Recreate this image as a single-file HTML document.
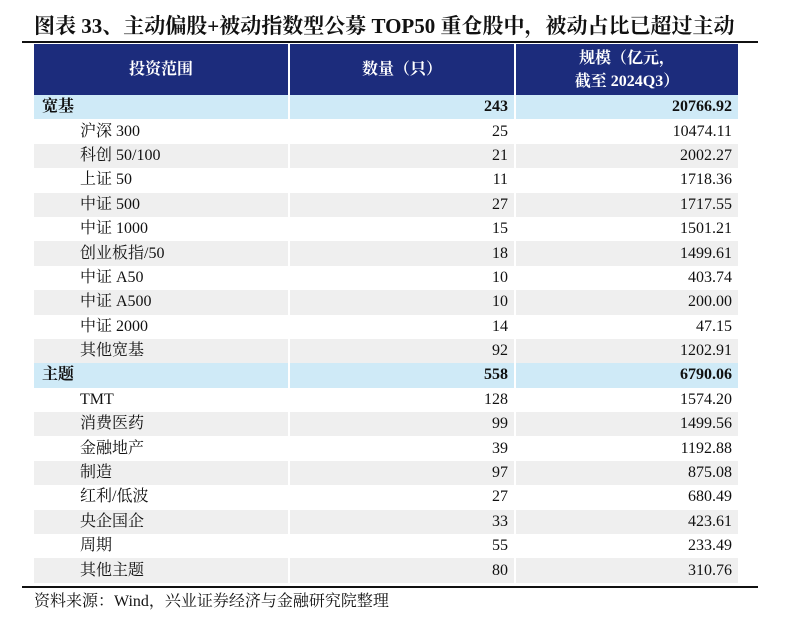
<!DOCTYPE html>
<html><head><meta charset="utf-8"><style>
body{margin:0;width:792px;height:623px;background:#fff;font-family:"Liberation Serif","Noto Serif CJK SC",serif;color:#111;position:relative;overflow:hidden}
.title{position:absolute;left:34px;top:10px;font-size:21px;font-weight:bold;white-space:nowrap;letter-spacing:0}
.line{position:absolute;left:22px;width:736px;height:1.5px;background:#111}
table{position:absolute;left:34px;top:44px;width:704px;border-collapse:collapse;font-size:16px;table-layout:fixed}
td{padding:0;height:24.4px;border-left:2px solid #fff;line-height:24px}
td:first-child{border-left:none}
th{background:#1c2c7c;color:#fff;height:51px;font-weight:bold;font-size:16px;border-left:2px solid #fff;line-height:23px;padding:0}
th:first-child{border-left:none}
.c1{width:254px}.c2{width:224px}
td.n{text-align:right;padding-right:6px}
td.l{padding-left:46px}
tr.b td{background:#cfeaf7;font-weight:bold}
tr.b td.l{padding-left:8px}
tr.g td{background:#efefef}
.src{position:absolute;left:34px;top:588px;font-size:16px}
</style></head><body>
<div class="title">图表 33、主动偏股+被动指数型公募 TOP50 重仓股中，被动占比已超过主动</div>
<div class="line" style="top:41px"></div>
<table>
<tr><th class="c1">投资范围</th><th class="c2">数量（只）</th><th>规模（亿元，<br>截至 2024Q3）</th></tr>
<tr class="b"><td class="l">宽基</td><td class="n">243</td><td class="n">20766.92</td></tr>
<tr><td class="l">沪深 300</td><td class="n">25</td><td class="n">10474.11</td></tr>
<tr class="g"><td class="l">科创 50/100</td><td class="n">21</td><td class="n">2002.27</td></tr>
<tr><td class="l">上证 50</td><td class="n">11</td><td class="n">1718.36</td></tr>
<tr class="g"><td class="l">中证 500</td><td class="n">27</td><td class="n">1717.55</td></tr>
<tr><td class="l">中证 1000</td><td class="n">15</td><td class="n">1501.21</td></tr>
<tr class="g"><td class="l">创业板指/50</td><td class="n">18</td><td class="n">1499.61</td></tr>
<tr><td class="l">中证 A50</td><td class="n">10</td><td class="n">403.74</td></tr>
<tr class="g"><td class="l">中证 A500</td><td class="n">10</td><td class="n">200.00</td></tr>
<tr><td class="l">中证 2000</td><td class="n">14</td><td class="n">47.15</td></tr>
<tr class="g"><td class="l">其他宽基</td><td class="n">92</td><td class="n">1202.91</td></tr>
<tr class="b"><td class="l">主题</td><td class="n">558</td><td class="n">6790.06</td></tr>
<tr><td class="l">TMT</td><td class="n">128</td><td class="n">1574.20</td></tr>
<tr class="g"><td class="l">消费医药</td><td class="n">99</td><td class="n">1499.56</td></tr>
<tr><td class="l">金融地产</td><td class="n">39</td><td class="n">1192.88</td></tr>
<tr class="g"><td class="l">制造</td><td class="n">97</td><td class="n">875.08</td></tr>
<tr><td class="l">红利/低波</td><td class="n">27</td><td class="n">680.49</td></tr>
<tr class="g"><td class="l">央企国企</td><td class="n">33</td><td class="n">423.61</td></tr>
<tr><td class="l">周期</td><td class="n">55</td><td class="n">233.49</td></tr>
<tr class="g"><td class="l">其他主题</td><td class="n">80</td><td class="n">310.76</td></tr>
</table>
<div class="line" style="top:586px"></div>
<div class="src">资料来源：Wind，兴业证券经济与金融研究院整理</div>
</body></html>
